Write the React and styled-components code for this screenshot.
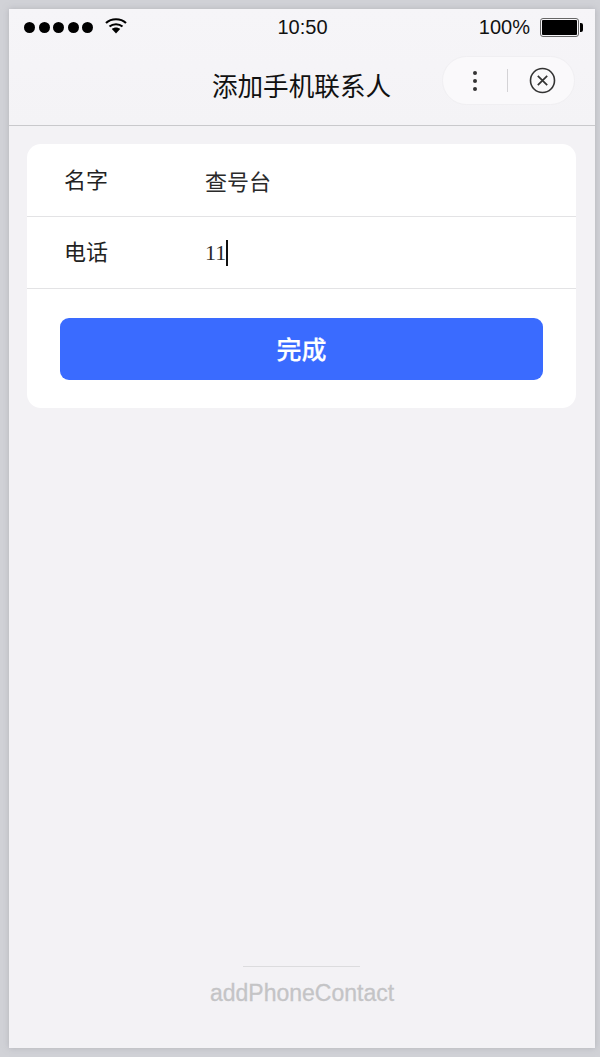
import React from 'react'
import styled, { createGlobalStyle } from 'styled-components'

const GlobalStyle = createGlobalStyle`
  html, body {
    margin: 0;
    padding: 0;
    background: #d1d2d7;
  }
  * { box-sizing: border-box; }
`;

const Stage = styled.div`
  width: 600px;
  height: 1057px;
  padding: 9px 5px 9px 9px;
  background: #d1d2d7;
  font-family: "Liberation Sans", "Noto Sans CJK SC", sans-serif;
`;
const Phone = styled.div`
  display: flex;
  flex-direction: column;
  height: 100%;
  background: #f3f2f5;
  box-shadow: 0 0 6px rgba(150, 150, 155, 0.5);
`;
const Header = styled.header`
  height: 117px;
  flex: none;
  background: linear-gradient(#f6f5f8, #f4f3f6);
  border-bottom: 1px solid #c9c9cc;
`;
const StatusBar = styled.div`
  display: grid;
  grid-template-columns: 1fr auto 1fr;
  align-items: center;
  height: 37px;
  padding: 0 14px 0 15px;
`;
const Signal = styled.div`
  display: flex;
  align-items: center;
  gap: 3.5px;
`;
const Dot = styled.span`
  width: 11px;
  height: 11px;
  border-radius: 50%;
  background: #000;
`;
const Wifi = styled.svg`
  width: 22px;
  height: 17px;
  margin-left: 8px;
  margin-top: -4px;
`;
const Time = styled.div`
  font-size: 20px;
  color: #111;
`;
const BatteryGroup = styled.div`
  display: flex;
  justify-content: flex-end;
  align-items: center;
  gap: 10px;
  font-size: 20px;
  color: #111;
`;
const Battery = styled.div`
  position: relative;
  width: 39px;
  height: 19px;
  margin-right: 2px;
  padding: 1px;
  border: 1px solid #666;
  border-radius: 3px;
  &::before {
    content: "";
    display: block;
    height: 100%;
    background: #000;
    border-radius: 1px;
  }
  &::after {
    content: "";
    position: absolute;
    right: -5px;
    top: 4px;
    width: 3px;
    height: 9px;
    background: #000;
    border-radius: 0 2px 2px 0;
  }
`;
const NavBar = styled.div`
  position: relative;
  display: flex;
  justify-content: center;
  align-items: center;
  height: 79px;
`;
const Title = styled.h1`
  margin: 4px 1px 0 0;
  font-size: 25.6px;
  line-height: 1.2;
  font-weight: 400;
  color: #111;
`;
const Capsule = styled.div`
  position: absolute;
  right: 20px;
  top: 10px;
  display: flex;
  align-items: center;
  width: 133px;
  height: 49px;
  background: #faf9fb;
  border: 1px solid #f0eff2;
  border-radius: 25px;
`;
const MoreDots = styled.div`
  display: flex;
  flex-direction: column;
  align-items: center;
  gap: 4px;
  width: 64px;
`;
const MoreDot = styled.span`
  width: 4px;
  height: 4px;
  border-radius: 50%;
  background: #333;
`;
const CapsuleDivider = styled.span`
  width: 1px;
  height: 23px;
  background: #d4d3d6;
`;
const CloseIcon = styled.svg`
  width: 27px;
  height: 27px;
  margin-left: 21px;
`;
const Card = styled.section`
  margin: 18px 19px 0 18px;
  height: 264px;
  background: #fff;
  border-radius: 14px;
  overflow: hidden;
`;
const Row = styled.div`
  display: flex;
  align-items: center;
  height: ${props => props.$height}px;
  padding-left: 37px;
  border-bottom: 1px solid #e3e3e5;
  font-size: 22px;
`;
const Label = styled.span`
  width: 141px;
  margin-top: -5px;
  color: #222;
`;
const Value = styled.span`
  display: flex;
  align-items: center;
  font-family: "Liberation Serif", "Noto Sans CJK SC", serif;
  color: #2a2a2a;
`;
const Caret = styled.span`
  width: 1.5px;
  height: 26px;
  margin-top: 1px;
  background: #111;
`;
const ButtonWrap = styled.div`
  padding: 29px 33px 0;
`;
const DoneButton = styled.button`
  display: block;
  width: 100%;
  height: 62px;
  padding: 0 0 3px;
  border: none;
  border-radius: 9px;
  background: #3a6bff;
  color: #fff;
  font-family: "Liberation Sans", "Noto Sans CJK SC", sans-serif;
  font-size: 25px;
  font-weight: 500;
  -webkit-text-stroke: 0.2px #fff;
`;
const Footer = styled.footer`
  margin-top: auto;
  padding-bottom: 42px;
  display: flex;
  flex-direction: column;
  align-items: center;
`;
const FooterLine = styled.span`
  width: 117px;
  height: 1px;
  margin-right: 1px;
  margin-bottom: 1px;
  background: #dcdcde;
`;
const FooterText = styled.span`
  margin-top: 13px;
  font-size: 23px;
  line-height: 25px;
  color: #c4c4c6;
  -webkit-text-stroke: 0.3px #c4c4c6;
`;

export default function App() {
  return (
    <>
      <GlobalStyle />
      <Stage>
        <Phone>
          <Header>
            <StatusBar>
              <Signal>
                {[0, 1, 2, 3, 4].map(i => <Dot key={i} />)}
                <Wifi viewBox="0 0 22 17">
                  <path d="M1 6 C6.5 1, 15.5 1, 21 6" fill="none" stroke="#000" strokeWidth="2.2" />
                  <path d="M4.5 9.5 C8 6.5, 14 6.5, 17.5 9.5" fill="none" stroke="#000" strokeWidth="2.2" />
                  <path d="M6.8 12 C9.2 10, 12.8 10, 15.2 12 L11 16.5 Z" fill="#000" />
                </Wifi>
              </Signal>
              <Time>10:50</Time>
              <BatteryGroup>
                100%
                <Battery />
              </BatteryGroup>
            </StatusBar>
            <NavBar>
              <Title>添加手机联系人</Title>
              <Capsule>
                <MoreDots>
                  <MoreDot />
                  <MoreDot />
                  <MoreDot />
                </MoreDots>
                <CapsuleDivider />
                <CloseIcon viewBox="0 0 27 27">
                  <circle cx="13.5" cy="13.5" r="12" fill="none" stroke="#333" strokeWidth="1.6" />
                  <path d="M8.8 8.8 L18.2 18.2 M18.2 8.8 L8.8 18.2" fill="none" stroke="#333" strokeWidth="1.7" />
                </CloseIcon>
              </Capsule>
            </NavBar>
          </Header>
          <Card>
            <Row $height={73}>
              <Label>名字</Label>
              <Value>查号台</Value>
            </Row>
            <Row $height={72}>
              <Label>电话</Label>
              <Value>11<Caret /></Value>
            </Row>
            <ButtonWrap>
              <DoneButton>完成</DoneButton>
            </ButtonWrap>
          </Card>
          <Footer>
            <FooterLine />
            <FooterText>addPhoneContact</FooterText>
          </Footer>
        </Phone>
      </Stage>
    </>
  )
}
